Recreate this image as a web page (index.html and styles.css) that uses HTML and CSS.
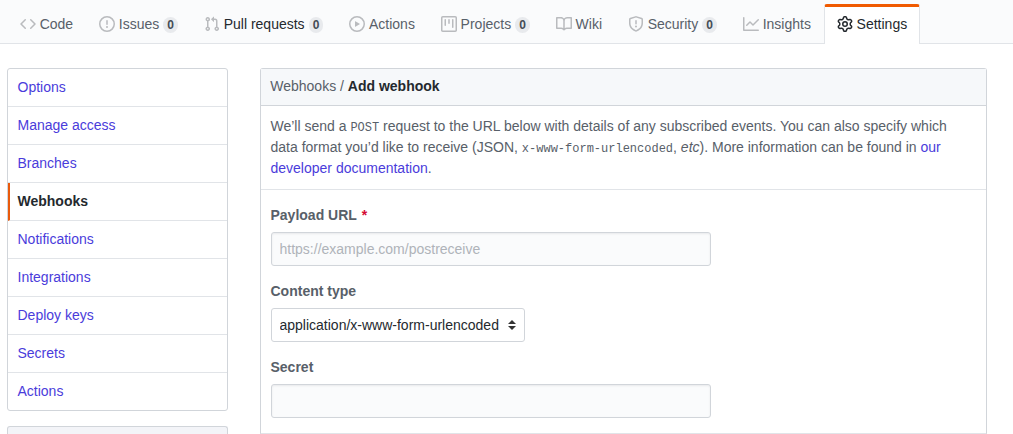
FILE: index.html
```
<!DOCTYPE html>
<html lang="en">
<head>
  <meta charset="UTF-8">
  <meta name="viewport" content="width=device-width, initial-scale=1.0">
  <title>Add webhook</title>
  <link rel="stylesheet" href="styles.css">
</head>
<body>
<nav class="reponav">
  <a class="tab"><svg class="icon" viewBox="0 0 16 16"><path d="M4.72 3.22a.75.75 0 011.06 1.06L2.06 8l3.72 3.72a.75.75 0 11-1.06 1.06L.47 8.53a.75.75 0 010-1.06l4.25-4.25zm6.56 0a.75.75 0 10-1.06 1.06L13.94 8l-3.72 3.72a.75.75 0 101.06 1.06l4.25-4.25a.75.75 0 000-1.06l-4.25-4.25z"/></svg>Code</a>
  <a class="tab"><svg class="icon" viewBox="0 0 16 16"><path fill-rule="evenodd" d="M8 1.5a6.5 6.5 0 100 13 6.5 6.5 0 000-13zM0 8a8 8 0 1116 0A8 8 0 010 8zm9 3a1 1 0 11-2 0 1 1 0 012 0zm-.25-6.25a.75.75 0 00-1.5 0v3.5a.75.75 0 001.5 0v-3.5z"/></svg>Issues<span class="counter">0</span></a>
  <a class="tab hover"><svg class="icon" viewBox="0 0 16 16"><path fill-rule="evenodd" d="M7.177 3.073L9.573.677A.25.25 0 0110 .854v4.792a.25.25 0 01-.427.177L7.177 3.427a.25.25 0 010-.354zM3.75 2.5a.75.75 0 100 1.5.75.75 0 000-1.5zm-2.25.75a2.25 2.25 0 113 2.122v5.256a2.251 2.251 0 11-1.5 0V5.372A2.25 2.25 0 011.5 3.25zM11 2.5h-1V4h1a1 1 0 011 1v5.628a2.251 2.251 0 101.5 0V5A2.5 2.5 0 0011 2.5zm1 10.25a.75.75 0 111.5 0 .75.75 0 01-1.5 0zM3.75 12a.75.75 0 100 1.5.75.75 0 000-1.5z"/></svg>Pull requests<span class="counter">0</span></a>
  <a class="tab"><svg class="icon" viewBox="0 0 16 16"><path fill-rule="evenodd" d="M1.5 8a6.5 6.5 0 1113 0 6.5 6.5 0 01-13 0zM8 0a8 8 0 100 16A8 8 0 008 0zM6.379 5.227A.25.25 0 006 5.442v5.117a.25.25 0 00.379.214l4.264-2.559a.25.25 0 000-.428L6.379 5.227z"/></svg>Actions</a>
  <a class="tab"><svg class="icon" viewBox="0 0 16 16"><path fill-rule="evenodd" d="M1.75 0A1.75 1.75 0 000 1.75v12.5C0 15.216.784 16 1.75 16h12.5A1.75 1.75 0 0016 14.25V1.75A1.75 1.75 0 0014.25 0H1.75zM1.5 1.75a.25.25 0 01.25-.25h12.5a.25.25 0 01.25.25v12.5a.25.25 0 01-.25.25H1.75a.25.25 0 01-.25-.25V1.75zM11.75 3a.75.75 0 00-.75.75v7.5a.75.75 0 001.5 0v-7.5a.75.75 0 00-.75-.75zm-8.25.75a.75.75 0 011.5 0v5.5a.75.75 0 01-1.5 0v-5.5zM8 3a.75.75 0 00-.75.75v3.5a.75.75 0 001.5 0v-3.5A.75.75 0 008 3z"/></svg>Projects<span class="counter">0</span></a>
  <a class="tab"><svg class="icon" viewBox="0 0 16 16"><path fill-rule="evenodd" d="M0 1.75A.75.75 0 01.75 1h4.253c1.227 0 2.317.59 3 1.501A3.744 3.744 0 0111.006 1h4.245a.75.75 0 01.75.75v10.5a.75.75 0 01-.75.75h-4.507a2.25 2.25 0 00-1.591.659l-.622.621a.75.75 0 01-1.06 0l-.622-.621A2.25 2.25 0 005.258 13H.75a.75.75 0 01-.75-.75V1.75zm8.755 3a2.25 2.25 0 012.25-2.25H14.5v9h-3.757c-.71 0-1.4.201-1.992.572l.004-7.322zm-1.504 7.324l.004-5.073-.002-2.253A2.25 2.25 0 005.003 2.5H1.5v9h3.757a3.75 3.75 0 011.994.574z"/></svg>Wiki</a>
  <a class="tab"><svg class="icon" viewBox="0 0 16 16"><path fill-rule="evenodd" d="M7.467.133a1.75 1.75 0 011.066 0l5.25 1.68A1.75 1.75 0 0115 3.48V7c0 1.566-.32 3.182-1.303 4.682-.983 1.498-2.585 2.813-5.032 3.855a1.7 1.7 0 01-1.33 0c-2.447-1.042-4.049-2.357-5.032-3.855C1.32 10.182 1 8.566 1 7V3.48a1.75 1.75 0 011.217-1.667l5.25-1.68zm.61 1.429a.25.25 0 00-.153 0l-5.25 1.68a.25.25 0 00-.174.238V7c0 1.358.275 2.666 1.057 3.86.784 1.194 2.121 2.34 4.366 3.297a.2.2 0 00.154 0c2.245-.956 3.582-2.104 4.366-3.298C13.225 9.666 13.5 8.36 13.5 7V3.48a.25.25 0 00-.174-.237l-5.25-1.68zM9 10.5a1 1 0 11-2 0 1 1 0 012 0zm-.25-5.75a.75.75 0 10-1.5 0v3a.75.75 0 001.5 0v-3z"/></svg>Security<span class="counter">0</span></a>
  <a class="tab"><svg class="icon" viewBox="0 0 16 16"><path fill-rule="evenodd" d="M1.5 1.75a.75.75 0 00-1.5 0v12.5c0 .414.336.75.75.75h14.5a.75.75 0 000-1.5H1.5V1.75zm14.28 2.53a.75.75 0 00-1.06-1.06L10 7.94 7.53 5.47a.75.75 0 00-1.06 0L3.22 8.72a.75.75 0 001.06 1.06L7 7.06l2.47 2.47a.75.75 0 001.06 0l5.25-5.25z"/></svg>Insights</a>
  <a class="tab selected"><svg class="icon" viewBox="0 0 16 16"><path fill-rule="evenodd" d="M7.429 1.525a6.593 6.593 0 011.142 0c.036.003.108.036.137.146l.289 1.105c.147.56.55.967.997 1.189.174.086.341.183.501.29.417.278.97.423 1.53.27l1.102-.303c.11-.03.175.016.195.046.219.31.41.641.573.989.014.031.022.11-.059.19l-.815.806c-.411.406-.562.957-.53 1.456a4.588 4.588 0 010 .582c-.032.499.119 1.05.53 1.456l.815.806c.08.08.073.159.059.19a6.494 6.494 0 01-.573.99c-.02.029-.086.074-.195.045l-1.103-.303c-.559-.153-1.112-.008-1.529.27-.16.107-.327.204-.5.29-.449.222-.851.628-.998 1.189l-.289 1.105c-.029.11-.101.143-.137.146a6.613 6.613 0 01-1.142 0c-.036-.003-.108-.037-.137-.146l-.289-1.105c-.147-.56-.55-.967-.997-1.189a4.502 4.502 0 01-.501-.29c-.417-.278-.97-.423-1.53-.27l-1.102.303c-.11.03-.175-.016-.195-.046a6.492 6.492 0 01-.573-.989c-.014-.031-.022-.11.059-.19l.815-.806c.411-.406.562-.957.53-1.456a4.587 4.587 0 010-.582c.032-.499-.119-1.05-.53-1.456l-.815-.806c-.08-.08-.073-.159-.059-.19a6.44 6.44 0 01.573-.99c.02-.029.086-.075.195-.045l1.103.303c.559.153 1.112.008 1.529-.27.16-.107.327-.204.5-.29.449-.222.851-.628.998-1.189l.289-1.105c.029-.11.101-.143.137-.146zM8 0c-.236 0-.47.01-.701.03-.743.065-1.29.615-1.458 1.261l-.29 1.106c-.017.066-.078.158-.211.224a5.994 5.994 0 00-.668.386c-.123.082-.233.09-.3.071L3.27 2.776c-.644-.177-1.392.02-1.82.63a7.977 7.977 0 00-.704 1.217c-.315.675-.111 1.422.363 1.891l.815.806c.05.048.098.147.088.294a6.084 6.084 0 000 .772c.01.147-.038.246-.088.294l-.815.806c-.474.469-.678 1.216-.363 1.891.2.428.436.835.704 1.218.428.609 1.176.806 1.82.63l1.103-.303c.066-.019.176-.011.299.071.213.143.436.272.668.386.133.066.194.158.212.224l.289 1.106c.169.646.715 1.196 1.458 1.26a8.094 8.094 0 001.402 0c.743-.064 1.29-.614 1.458-1.26l.29-1.106c.017-.066.078-.158.211-.224a5.98 5.98 0 00.668-.386c.123-.082.233-.09.3-.071l1.102.302c.644.177 1.392-.02 1.82-.63.268-.382.505-.789.704-1.217.315-.675.111-1.422-.364-1.891l-.814-.806c-.05-.048-.098-.147-.088-.294a6.1 6.1 0 000-.772c-.01-.147.039-.246.088-.294l.814-.806c.475-.469.679-1.216.364-1.891a7.992 7.992 0 00-.704-1.218c-.428-.609-1.176-.806-1.82-.63l-1.103.303c-.066.019-.176.011-.299-.071a5.991 5.991 0 00-.668-.386c-.133-.066-.194-.158-.212-.224L10.16 1.29C9.99.645 9.444.095 8.701.031A8.094 8.094 0 008 0zm1.5 8a1.5 1.5 0 11-3 0 1.5 1.5 0 013 0zM11 8a3 3 0 11-6 0 3 3 0 016 0z"/></svg>Settings</a>
</nav>

<main class="container">
  <aside class="sidebar">
    <nav class="menu">
      <a class="menu-item">Options</a>
      <a class="menu-item">Manage access</a>
      <a class="menu-item">Branches</a>
      <a class="menu-item selected">Webhooks</a>
      <a class="menu-item">Notifications</a>
      <a class="menu-item">Integrations</a>
      <a class="menu-item">Deploy keys</a>
      <a class="menu-item">Secrets</a>
      <a class="menu-item">Actions</a>
    </nav>
    <div class="menu-heading"></div>
  </aside>

  <section class="box">
    <h2 class="box-header">Webhooks / <strong>Add webhook</strong></h2>
    <p class="box-intro">We’ll send a <code>POST</code> request to the URL below with details of any subscribed events. You can also specify which data format you’d like to receive (JSON, <code>x-www-form-urlencoded</code>, <em>etc</em>). More information can be found in <a>our developer documentation</a>.</p>
    <form class="box-form">
      <label class="required" for="url">Payload URL</label>
      <input type="text" id="url" placeholder="https://example.com/postreceive">
      <label for="content-type">Content type</label>
      <div class="select-wrap">
        <select id="content-type">
          <option>application/x-www-form-urlencoded</option>
          <option>application/json</option>
        </select>
        <svg class="arrows" viewBox="0 0 8 10"><path d="M4 0l4 4H0zM0 6h8l-4 4z"/></svg>
      </div>
      <label for="secret">Secret</label>
      <input type="text" id="secret">
    </form>
  </section>
</main>
</body>
</html>
```
FILE: styles.css
```
* { box-sizing: border-box; }

body {
    margin: 0;
    font: 14px/21px "Liberation Sans", Arial, sans-serif;
    color: #586069;
    background-color: #fff;
}

a { color: #4a3cdb; }

/* Repository tabs */
.reponav {
    display: flex;
    height: 44px;
    padding: 4px 0 0 7px;
    background-color: #fafbfc;
    border-bottom: 1px solid #e1e4e8;
}

.tab {
    display: flex;
    align-items: center;
    height: 40px;
    padding: 0 12px 3px;
    border: 1px solid transparent;
    border-top-width: 3px;
    border-bottom: 0;
    border-radius: 3px 3px 0 0;
    color: #586069;
    white-space: nowrap;
}

.tab.hover { color: #24292e; }

.tab.selected {
    color: #24292e;
    background-color: #fff;
    border-color: #f05a00 #e1e4e8 transparent;
}

.icon {
    width: 16px;
    height: 16px;
    margin-right: 3.7px;
    fill: #b9bbbe;
}

.tab.selected .icon { fill: #24292e; }

.counter {
    margin: 2px 0 0 4px;
    padding: 2px 4px;
    font-size: 12px;
    font-weight: bold;
    line-height: 12px;
    color: #444d56;
    background-color: #e8eaed;
    border-radius: 20px;
}

.container {
    display: flex;
    align-items: flex-start;
    gap: 32px;
    width: 980px;
    margin: 24px 0 0 7px;
}

/* Settings menu */
.sidebar { width: 221px; }

.menu {
    margin-bottom: 15px;
    border: 1px solid #d1d5da;
    border-radius: 3px;
    overflow: hidden;
}

.menu-item {
    display: block;
    height: 38px;
    padding: 8px 9.5px;
    border-bottom: 1px solid #e1e4e8;
}

.menu-item:last-child {
    height: 37px;
    border-bottom: 0;
}

.menu-item.selected {
    padding-left: 7.5px;
    border-left: 2px solid #e95a0c;
    font-weight: bold;
    color: #24292e;
}

.menu-heading {
    height: 8px;
    background-color: #f3f4f8;
    border: 1px solid #d1d5da;
    border-bottom: 0;
    border-radius: 3px 3px 0 0;
}

/* Webhook form */
.box {
    width: 727px;
    border: 1px solid #d1d5da;
    border-radius: 3px 3px 0 0;
    border-bottom-color: #e1e4e8;
}

.box-header {
    height: 37px;
    margin: 0;
    padding: 7px 9.25px;
    font-size: 14px;
    font-weight: normal;
    background-color: #f6f8fa;
    border-bottom: 1px solid #d1d5da;
}

.box-header strong { color: #24292e; }

.box-intro {
    margin: 0;
    padding: 10px 9.5px;
    border-bottom: 1px solid #e1e4e8;
}

code { font: 12px "Liberation Mono", monospace; }

.box-form { padding: 15px 9.5px; }

label {
    display: block;
    margin-bottom: 6px;
    font-weight: bold;
}

.required::after {
    content: "*";
    padding-left: 5px;
    color: #d50a35;
}

input, select {
    display: block;
    height: 34px;
    padding: 6px 8px;
    font: inherit;
    color: #24292e;
    border: 1px solid #d1d5da;
    border-radius: 3px;
    box-shadow: inset 0 1px 2px rgba(27, 31, 35, 0.075);
    outline: none;
}

input {
    width: 440px;
    margin-bottom: 15px;
    background-color: #fafbfc;
}

input:last-child { margin-bottom: 0; }

input::placeholder { color: #afb3b9; }

.select-wrap {
    position: relative;
    width: 254px;
    margin-bottom: 15px;
}

select {
    width: 100%;
    appearance: none;
    background-color: #fff;
    box-shadow: none;
}

/* sits over the select */
.arrows {
    position: absolute;
    top: 12px;
    right: 9px;
    width: 8px;
    height: 10px;
    fill: #333;
}
```
